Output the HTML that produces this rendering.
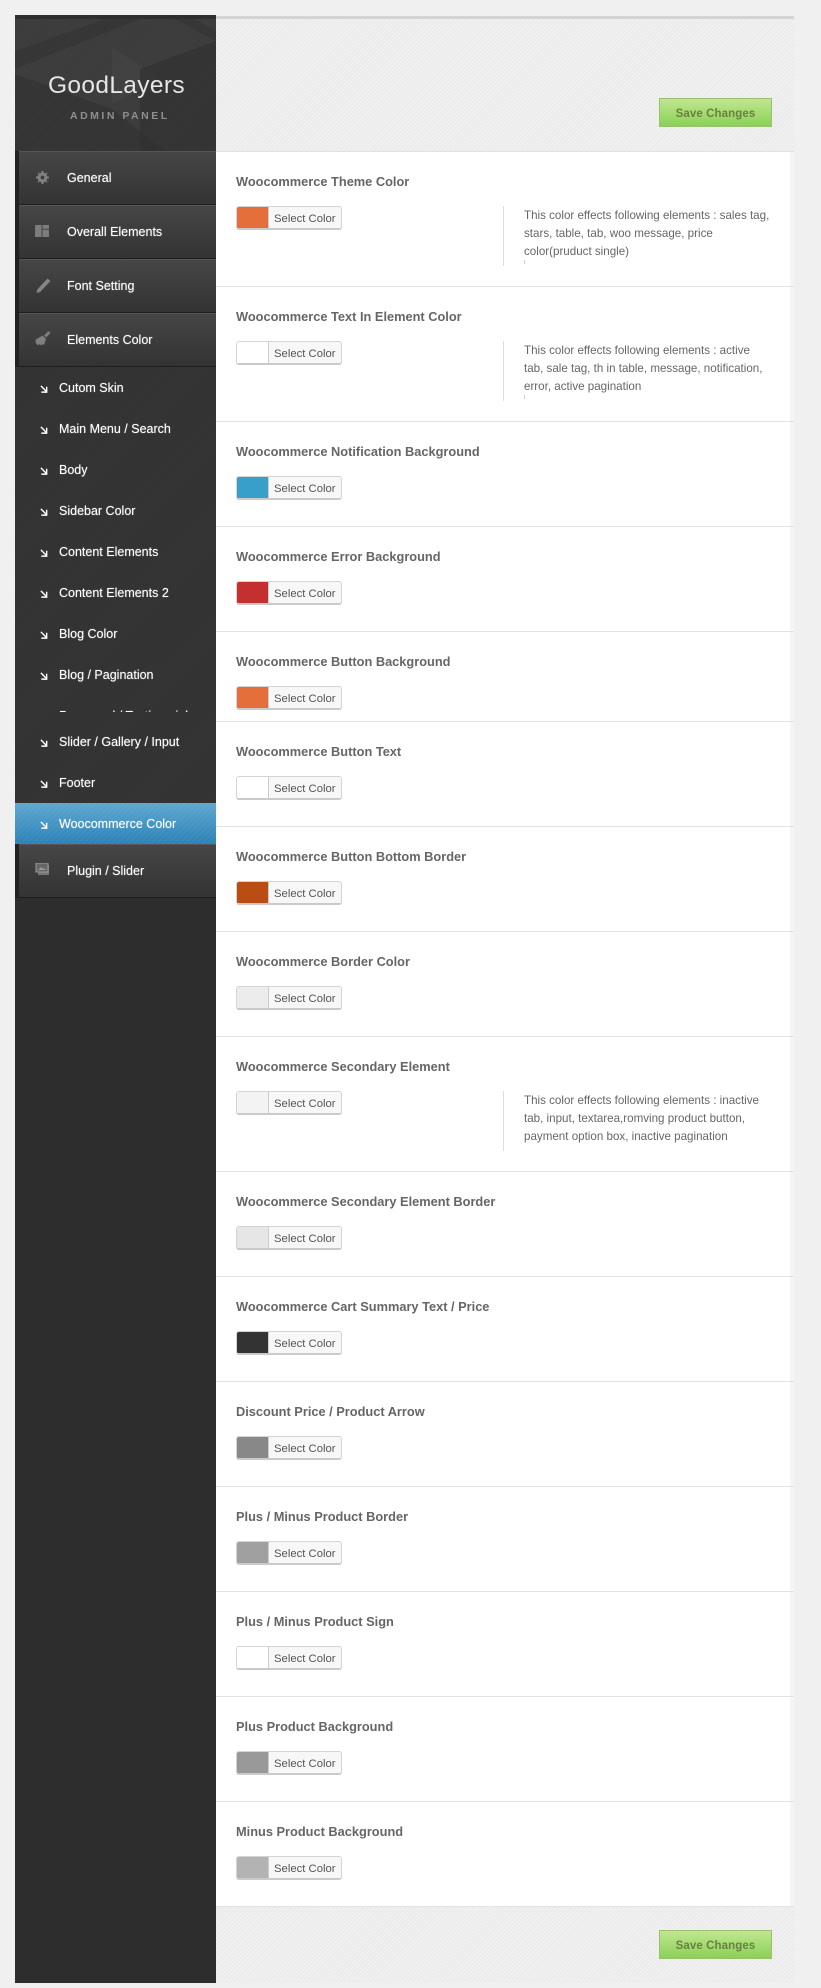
<!DOCTYPE html>
<html><head><meta charset="utf-8"><title>GoodLayers Admin Panel</title>
<style>
html,body{margin:0;padding:0;background:#f0f0f0}
body{position:relative;width:821px;height:1988px;overflow:hidden;font-family:"Liberation Sans",sans-serif}
div,span,svg{position:absolute;box-sizing:border-box}
#side{left:15px;top:15px;width:201px;height:1968px;background:#2d2d2d}
#stripes{left:15px;top:367px;width:201px;height:530px;background:repeating-linear-gradient(135deg,#303030 0,#303030 1px,#373737 1px,#373737 2px)}
#head{left:15px;top:15px;width:201px;height:136px;overflow:hidden;background:#3c3c3c;border-top:4px solid #2e2e2e}
.nav{left:15px;width:201px;height:54px;background:#222}
.nav i{position:absolute;left:4px;top:0;right:0;bottom:0;background:linear-gradient(#464646,#333);border-top:1px solid #565656;border-bottom:1px solid #1e1e1e}
.nt{left:67px;margin-top:1px;color:#fff;font-size:12.5px;line-height:18px;white-space:nowrap;text-shadow:0 0 1px rgba(255,255,255,.55)}
.st{left:59px;color:#fff;font-size:12.5px;line-height:18px;white-space:nowrap;text-shadow:0 0 1px rgba(255,255,255,.55)}
.ar{left:40px;width:8px;height:8px;margin-top:1px}
.ar path{stroke-width:1.6}
#act{left:15px;top:803px;width:201px;height:41px;background:repeating-linear-gradient(135deg,rgba(255,255,255,.03) 0,rgba(255,255,255,.03) 2px,transparent 2px,transparent 4px),linear-gradient(#5fa7cf,#2b82b7)}
.pat{left:216px;width:578px;background:repeating-linear-gradient(135deg,#e9e9e9 0,#e9e9e9 1px,#f0f0f0 1px,#f0f0f0 3px)}
#white{left:216px;top:151px;width:574px;height:1755px;background:#fff}
#strip{left:790px;top:151px;width:4px;height:1755px;background:#f4f4f4}
.save{left:659px;width:113px;height:29px;border:1px solid #9cbf6e;background:linear-gradient(#c0e78f,#8ad157);color:#6a8042;font-size:11.5px;font-weight:bold;text-align:center;line-height:30px;letter-spacing:.1px}
.sep{left:216px;width:578px;height:1px;margin-top:1px;background:#e2e2e2}
.t{left:236px;margin-top:1px;color:#66666a;font-size:12.8px;font-weight:bold;line-height:18px;white-space:nowrap}
.b{left:236px;width:106px;height:24px;background:#f7f7f7;border:1px solid #d4d4d4;border-bottom:2px solid #cacaca;border-radius:3px;overflow:hidden;color:#555;font-size:11.3px;line-height:24px;white-space:nowrap}
.b u{position:absolute;left:0;top:0;width:31px;height:100%;border-right:1px solid #ccc}
.b span{left:37px;top:0}
.vl{left:503px;width:1px;height:60px;background:#dedede}
.d{left:524px;margin-top:1px;color:#66666a;font-size:11.6px;line-height:18px;white-space:nowrap}
.tk{left:524px;width:1px;height:4px;background:#ccc}
</style></head><body>
<div id="side"></div>
<div id="stripes"></div>
<div id="head">
<svg style="left:0;top:0" width="201" height="132" viewBox="0 0 201 132">
<polygon points="0,0 201,0 201,132 0,132" fill="#404040"/>
<polygon points="0,32 90,0 125,0 0,50" fill="#303030" opacity=".45"/>
<polygon points="160,0 180,0 201,12 201,22" fill="#303030" opacity=".45"/>
<polygon points="97,28 145,60 97,85" fill="#4a4a4a" opacity=".6"/>
<polygon points="0,55 97,90 150,132 0,132" fill="#333" opacity=".6"/>
<polygon points="125,50 201,22 201,132 125,132" fill="#323232" opacity=".6"/>
</svg>
<div style="left:0;top:0;width:201px;height:132px;background:repeating-linear-gradient(135deg,rgba(0,0,0,.1) 0,rgba(0,0,0,.1) 1px,transparent 1px,transparent 2px)"></div>
</div>
<div style="left:48px;top:69px;color:#e6e6e6;font-size:24.500px;line-height:34px;white-space:nowrap;letter-spacing:.35px">GoodLayers</div>
<div style="left:70px;top:108px;color:#8f8f8f;font-size:10.500px;font-weight:bold;line-height:16px;letter-spacing:2.500px;white-space:nowrap">ADMIN PANEL</div>

<div class="nav" style="top:151px"><i></i></div>
<div class="nav" style="top:205px"><i></i></div>
<div class="nav" style="top:259px"><i></i></div>
<div class="nav" style="top:313px"><i></i></div>
<div class="nav" style="top:844px"><i></i></div>

<svg style="left:36px;top:171px" width="13" height="13" viewBox="0 0 14 14"><path fill-rule="evenodd" d="M6 0h2l.4 2 1.6.7L11.700 1.600 12.400 2.300 11.300 4l.7 1.600L14 6v2l-2 .4-.7 1.600 1.100 1.700-.7.7L10 11.300l-1.600.7L8 14H6l-.4-2L4 11.300 2.300 12.400 1.600 11.700 2.700 10 2 8.400 0 8V6l2-.4L2.700 4 1.600 2.300 2.300 1.600 4 2.700 5.600 2ZM7 5a2 2 0 1 0 0 4 2 2 0 0 0 0-4Z" fill="#808080"/></svg>
<svg style="left:35px;top:225px" width="14" height="12" viewBox="0 0 15 13"><path d="M0 0h7v13H0ZM8 0h7v4H8ZM8 5h7v8H8Z" fill="#7d7d7d"/></svg>
<svg style="left:36px;top:278px" width="15" height="15" viewBox="0 0 15 15"><path d="M11.500 0.500l3 2.500L4 14l-3.500 1 .8-3.500Z" fill="#868686"/></svg>
<svg style="left:35px;top:331px" width="16" height="15" viewBox="0 0 16 15"><path d="M13.500 0l2 2-4.500 4.500-2-2ZM7.500 4.500l3.500 3.500-2 6-1.500-1L6 14.500 4.500 13 3 14.500 0 11 1.500 10 0 9Z" fill="#7f7f7f"/></svg>
<svg style="left:35px;top:863px" width="17" height="15" viewBox="0 0 17 15"><path d="M3 2h11v10H3Z" fill="#777"/><path d="M1 0h12v9H1Z" fill="#666" stroke="#9a9a9a" stroke-width="1"/><path d="M3 7l3-3 2 2 1-1 2 2Z" fill="#999"/></svg>

<div class="nt" style="top:168px">General</div>
<div class="nt" style="top:222px">Overall Elements</div>
<div class="nt" style="top:276px">Font Setting</div>
<div class="nt" style="top:330px">Elements Color</div>

<div id="act"></div>
<svg class="ar" style="top:384px" viewBox="0 0 9 9"><path d="M1 1l6 6M7.500 2v6H1.500" fill="none" stroke="#fff" stroke-width="1.800"/></svg>
<div class="st" style="top:379px">Cutom Skin</div>
<svg class="ar" style="top:425px" viewBox="0 0 9 9"><path d="M1 1l6 6M7.500 2v6H1.500" fill="none" stroke="#fff" stroke-width="1.800"/></svg>
<div class="st" style="top:420px">Main Menu / Search</div>
<svg class="ar" style="top:466px" viewBox="0 0 9 9"><path d="M1 1l6 6M7.500 2v6H1.500" fill="none" stroke="#fff" stroke-width="1.800"/></svg>
<div class="st" style="top:461px">Body</div>
<svg class="ar" style="top:507px" viewBox="0 0 9 9"><path d="M1 1l6 6M7.500 2v6H1.500" fill="none" stroke="#fff" stroke-width="1.800"/></svg>
<div class="st" style="top:502px">Sidebar Color</div>
<svg class="ar" style="top:548px" viewBox="0 0 9 9"><path d="M1 1l6 6M7.500 2v6H1.500" fill="none" stroke="#fff" stroke-width="1.800"/></svg>
<div class="st" style="top:543px">Content Elements</div>
<svg class="ar" style="top:589px" viewBox="0 0 9 9"><path d="M1 1l6 6M7.500 2v6H1.500" fill="none" stroke="#fff" stroke-width="1.800"/></svg>
<div class="st" style="top:584px">Content Elements 2</div>
<svg class="ar" style="top:630px" viewBox="0 0 9 9"><path d="M1 1l6 6M7.500 2v6H1.500" fill="none" stroke="#fff" stroke-width="1.800"/></svg>
<div class="st" style="top:625px">Blog Color</div>
<svg class="ar" style="top:671px" viewBox="0 0 9 9"><path d="M1 1l6 6M7.500 2v6H1.500" fill="none" stroke="#fff" stroke-width="1.800"/></svg>
<div class="st" style="top:666px">Blog / Pagination</div>
<div style="left:15px;top:700px;width:201px;height:12px;overflow:hidden"><div class="st" style="left:44px;top:7px">Personnel / Testimonial</div></div>
<svg class="ar" style="top:738px" viewBox="0 0 9 9"><path d="M1 1l6 6M7.500 2v6H1.500" fill="none" stroke="#fff" stroke-width="1.800"/></svg>
<div class="st" style="top:733px">Slider / Gallery / Input</div>
<svg class="ar" style="top:779px" viewBox="0 0 9 9"><path d="M1 1l6 6M7.500 2v6H1.500" fill="none" stroke="#fff" stroke-width="1.800"/></svg>
<div class="st" style="top:774px">Footer</div>
<svg class="ar" style="top:820px" viewBox="0 0 9 9"><path d="M1 1l6 6M7.500 2v6H1.500" fill="none" stroke="#fff" stroke-width="1.800"/></svg>
<div class="st" style="top:815px">Woocommerce Color</div>
<div class="nt" style="top:861px">Plugin / Slider</div>

<div class="pat" style="top:19px;height:132px"></div>
<div style="left:216px;top:16px;width:578px;height:3px;background:#d4d4d4"></div>
<div class="pat" style="top:1906px;height:77px"></div>
<div id="white"></div>
<div id="strip"></div>
<div class="save" style="top:98px">Save Changes</div>
<div class="save" style="top:1930px">Save Changes</div>

<div class="sep" style="top:150px"></div>
<div class="sep" style="top:285px"></div>
<div class="sep" style="top:420px"></div>
<div class="sep" style="top:525px"></div>
<div class="sep" style="top:630px"></div>
<div class="sep" style="top:720px"></div>
<div class="sep" style="top:825px"></div>
<div class="sep" style="top:930px"></div>
<div class="sep" style="top:1035px"></div>
<div class="sep" style="top:1170px"></div>
<div class="sep" style="top:1275px"></div>
<div class="sep" style="top:1380px"></div>
<div class="sep" style="top:1485px"></div>
<div class="sep" style="top:1590px"></div>
<div class="sep" style="top:1695px"></div>
<div class="sep" style="top:1800px"></div>
<div class="sep" style="top:1905px"></div>

<div class="t" style="top:172px">Woocommerce Theme Color</div>
<div class="b" style="top:206px"><u style="background:#e56f3a"></u><span>Select Color</span></div>
<div class="vl" style="top:206px"></div>
<div class="d" style="top:206px">This color effects following elements : sales tag,<br>stars, table, tab, woo message, price<br>color(pruduct single)</div>
<div class="tk" style="top:260px"></div>

<div class="t" style="top:307px">Woocommerce Text In Element Color</div>
<div class="b" style="top:341px"><u style="background:#fff"></u><span>Select Color</span></div>
<div class="vl" style="top:341px"></div>
<div class="d" style="top:341px">This color effects following elements : active<br>tab, sale tag, th in table, message, notification,<br>error, active pagination</div>
<div class="tk" style="top:395px"></div>

<div class="t" style="top:442px">Woocommerce Notification Background</div>
<div class="b" style="top:476px"><u style="background:#379fc9"></u><span>Select Color</span></div>

<div class="t" style="top:547px">Woocommerce Error Background</div>
<div class="b" style="top:581px"><u style="background:#c42f2f"></u><span>Select Color</span></div>

<div class="t" style="top:652px">Woocommerce Button Background</div>
<div class="b" style="top:686px"><u style="background:#e56f3a"></u><span>Select Color</span></div>

<div class="t" style="top:742px">Woocommerce Button Text</div>
<div class="b" style="top:776px"><u style="background:#fff"></u><span>Select Color</span></div>

<div class="t" style="top:847px">Woocommerce Button Bottom Border</div>
<div class="b" style="top:881px"><u style="background:#b94d13"></u><span>Select Color</span></div>

<div class="t" style="top:952px">Woocommerce Border Color</div>
<div class="b" style="top:986px"><u style="background:#ececec"></u><span>Select Color</span></div>

<div class="t" style="top:1057px">Woocommerce Secondary Element</div>
<div class="b" style="top:1091px"><u style="background:#f3f3f3"></u><span>Select Color</span></div>
<div class="vl" style="top:1091px"></div>
<div class="d" style="top:1091px">This color effects following elements : inactive<br>tab, input, textarea,romving product button,<br>payment option box, inactive pagination</div>

<div class="t" style="top:1192px">Woocommerce Secondary Element Border</div>
<div class="b" style="top:1226px"><u style="background:#e6e6e6"></u><span>Select Color</span></div>

<div class="t" style="top:1297px">Woocommerce Cart Summary Text / Price</div>
<div class="b" style="top:1331px"><u style="background:#333"></u><span>Select Color</span></div>

<div class="t" style="top:1402px">Discount Price / Product Arrow</div>
<div class="b" style="top:1436px"><u style="background:#888"></u><span>Select Color</span></div>

<div class="t" style="top:1507px">Plus / Minus Product Border</div>
<div class="b" style="top:1541px"><u style="background:#a0a0a0"></u><span>Select Color</span></div>

<div class="t" style="top:1612px">Plus / Minus Product Sign</div>
<div class="b" style="top:1646px"><u style="background:#fff"></u><span>Select Color</span></div>

<div class="t" style="top:1717px">Plus Product Background</div>
<div class="b" style="top:1751px"><u style="background:#999"></u><span>Select Color</span></div>

<div class="t" style="top:1822px">Minus Product Background</div>
<div class="b" style="top:1856px"><u style="background:#b3b3b3"></u><span>Select Color</span></div>
</body></html>
